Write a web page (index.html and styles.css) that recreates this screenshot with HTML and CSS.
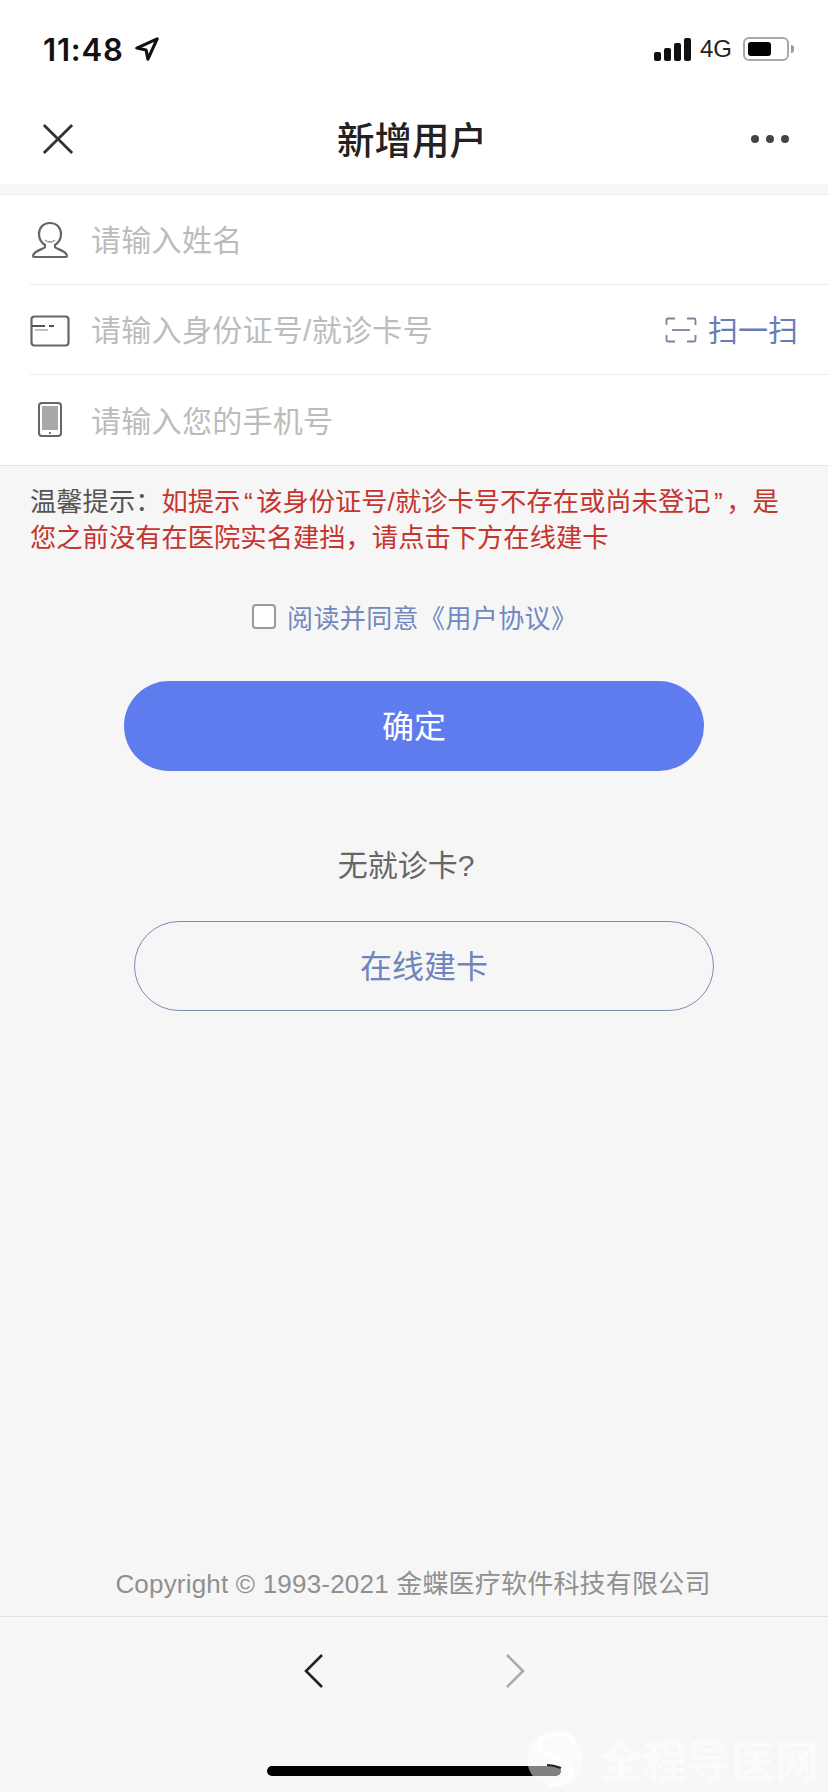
FILE: index.html
```html
<!DOCTYPE html>
<html lang="zh-CN">
<head>
  <meta charset="UTF-8">
  <title>新增用户</title>
  <link rel="stylesheet" href="styles.css">
</head>
<body>
  <div class="status-bar">
    <div class="status-left">
      <span class="time">11:48</span>
      <svg class="location" width="24" height="24" viewBox="0 0 26 26">
        <path d="M24 2 2 12l10 2 2 10z" fill="none" stroke="#111" stroke-width="3.400" stroke-linejoin="round"/>
      </svg>
    </div>
    <div class="status-right">
      <div class="signal">
        <span class="bar bar-1"></span>
        <span class="bar bar-2"></span>
        <span class="bar bar-3"></span>
        <span class="bar bar-4"></span>
      </div>
      <span class="network">4G</span>
      <div class="battery"><span class="battery-fill"></span></div>
      <span class="battery-cap"></span>
    </div>
  </div>

  <header class="nav-bar">
    <svg class="close-icon" width="34" height="34" viewBox="0 0 34 34">
      <path d="M2 2l30 30M32 2 2 32" stroke="#333" stroke-width="3" fill="none"/>
    </svg>
    <h1>新增用户</h1>
    <div class="more"><span></span><span></span><span></span></div>
  </header>

  <form class="user-form">
    <div class="form-row">
      <svg class="row-icon" width="40" height="38" viewBox="0 0 40 38">
        <path d="M20 2c-7 0-11 5-11 11 0 5 3 9 6 11v2c0 2-11 3-12 9 0 1 0 1 1 1h32c1 0 1 0 1-1-1-6-12-7-12-9v-2c3-2 6-6 6-11 0-6-4-11-11-11z" fill="none" stroke="#666" stroke-width="2.2"/>
        <path d="M15 19c3 2.500 7 2.500 10 0" fill="none" stroke="#999" stroke-width="1.600"/>
      </svg>
      <span class="placeholder">请输入姓名</span>
    </div>
    <div class="form-row">
      <svg class="row-icon row-icon-card" width="40" height="32" viewBox="0 0 40 32">
        <rect x="1.500" y="1.500" width="37" height="29" rx="3" fill="none" stroke="#666" stroke-width="2.2"/>
        <path d="M2 11h13M19 11h5" stroke="#555" stroke-width="2"/>
        <path d="M5 15h13" stroke="#aaa" stroke-width="1.500"/>
      </svg>
      <span class="placeholder">请输入身份证号/就诊卡号</span>
      <div class="scan">
        <svg width="32" height="26" viewBox="0 0 32 26">
          <path d="M10 1.500H3Q1.500 1.500 1.500 3v5M22 1.500h7q1.500 0 1.500 1.500v5M10 24.500H3q-1.500 0-1.500-1.500v-5M22 24.500h7q1.500 0 1.500-1.500v-5" fill="none" stroke="#7a83a0" stroke-width="1.800"/>
          <path d="M7 13h18" stroke="#7a83a0" stroke-width="1.800"/>
        </svg>
        <span class="scan-text">扫一扫</span>
      </div>
    </div>
    <div class="form-row">
      <svg class="row-icon" width="40" height="36" viewBox="0 0 40 36">
        <rect x="9" y="1" width="22" height="33" rx="3" fill="#fff" stroke="#666" stroke-width="2"/>
        <rect x="12" y="4" width="16" height="24" fill="#a9a9a9"/>
        <circle cx="20" cy="31" r="1" fill="#555"/>
      </svg>
      <span class="placeholder">请输入您的手机号</span>
    </div>
  </form>

  <p class="notice">温馨提示&#xFF1A;<span class="notice-red">如提示<span class="quote">“</span>该身份证号/就诊卡号不存在或尚未登记<span class="quote">”</span>&#xFF0C;是<br>您之前没有在医院实名建挡&#xFF0C;请点击下方在线建卡</span></p>

  <div class="agree">
    <span class="checkbox"></span>
    <span>阅读并同意《用户协议》</span>
  </div>

  <button type="button" class="btn-primary">确定</button>
  <p class="no-card">无就诊卡?</p>
  <button type="button" class="btn-outline">在线建卡</button>

  <p class="copyright">Copyright © 1993-2021 金蝶医疗软件科技有限公司</p>

  <footer class="bottom-bar">
    <svg width="20" height="34" viewBox="0 0 20 34">
      <path d="M18 1 2 17l16 16" fill="none" stroke="#222" stroke-width="2.600"/>
    </svg>
    <svg width="20" height="34" viewBox="0 0 20 34">
      <path d="M2 1l16 16L2 33" fill="none" stroke="#aaa" stroke-width="2.600"/>
    </svg>
  </footer>
  <div class="home-bar"></div>

  <div class="watermark">
    <svg width="64" height="64" viewBox="0 0 64 64">
      <circle cx="32" cy="32" r="28" fill="rgba(255,255,255,0.5)"/>
      <path d="M52 14C40 2 18 6 16 18c-2 12 30 12 32 26 1 8-10 14-22 14" fill="none" stroke="rgba(255,255,255,0.8)" stroke-width="5"/>
      <path d="M24 38c4 0 9 1 14 3" fill="none" stroke="#222" stroke-width="2"/>
    </svg>
    <span>全程导医网</span>
  </div>
</body>
</html>
```

FILE: styles.css
```css
* {
  box-sizing: border-box;
}

body {
  width: 828px;
  height: 1792px;
  margin: 0;
  position: relative;
  overflow: hidden;
  display: flex;
  flex-direction: column;
  background-color: #f6f6f6;
  font-family: "Liberation Sans", "Noto Sans CJK SC", sans-serif;
}

.status-bar {
  height: 94px;
  padding: 4px 34px 0 43px;
  display: flex;
  justify-content: space-between;
  align-items: center;
  background: #fff;
}

.status-left,
.status-right {
  display: flex;
  align-items: center;
}

.time {
  font-family: Inter, sans-serif;
  font-size: 31px;
  font-weight: 600;
  letter-spacing: 0.8px;
  color: #111;
}

.location {
  margin-left: 11px;
}

.signal {
  display: flex;
  align-items: flex-end;
  gap: 3px;
  height: 23px;
}

.bar {
  width: 7px;
  background: #111;
  border-radius: 2px;
}

.bar-1 { height: 9px; }
.bar-2 { height: 13px; }
.bar-3 { height: 18px; }
.bar-4 { height: 23px; }

.network {
  margin: 0 11px 0 9px;
  font-size: 24px;
  color: #222;
}

.battery {
  width: 46px;
  height: 24px;
  padding: 3px;
  border: 2px solid #a8a8a8;
  border-radius: 6px;
}

.battery-fill {
  display: block;
  width: 23px;
  height: 100%;
  background: #000;
  border-radius: 3px;
}

.battery-cap {
  width: 3px;
  height: 8px;
  margin-left: 2px;
  background: #999;
  border-radius: 0 3px 3px 0;
}

.nav-bar {
  height: 90px;
  padding: 0 39px 0 42px;
  display: flex;
  justify-content: space-between;
  align-items: center;
  background: #fff;
}

.close-icon {
  width: 32px;
}

.nav-bar h1 {
  margin: 0 0 3px -1px;
  font-size: 37.5px;
  font-weight: 500;
  color: #222;
}

.more {
  display: flex;
  gap: 7px;
}

.more span {
  width: 8px;
  height: 8px;
  background: #444;
  border-radius: 50%;
}

.user-form {
  margin-top: 10px;
  background: #fff;
  border-top: 1px solid #ececec;
  border-bottom: 1px solid #e6e6e6;
}

.form-row {
  height: 90px;
  margin-left: 30px;
  padding-right: 30px;
  display: flex;
  align-items: center;
  border-bottom: 1px solid #ececec;
}

.form-row:last-child {
  border-bottom: none;
}

.row-icon {
  margin-right: 21px;
  flex-shrink: 0;
}

.row-icon-card {
  margin-top: 2px;
}

.placeholder {
  padding-bottom: 3px;
  font-size: 30px;
  letter-spacing: 0.3px;
  color: #bcbcbc;
}

.scan {
  margin-left: auto;
  display: flex;
  align-items: center;
  gap: 11px;
  font-size: 30px;
  color: #6b7cb4;
}

.scan-text {
  padding-bottom: 4px;
}

.notice {
  margin: 18px 30px 0;
  font-size: 26.3px;
  line-height: 36px;
  white-space: nowrap;
  color: #555;
}

.notice-red {
  color: #c5352f;
}

.quote {
  margin: 0 3.5px;
}

.agree {
  margin-top: 42px;
  padding-left: 252px;
  display: flex;
  align-items: center;
  gap: 11px;
  font-size: 26px;
  letter-spacing: 0.4px;
  color: #7288c0;
}

.checkbox {
  width: 24px;
  height: 25px;
  background: #fff;
  border: 2px solid #9a9a9a;
  border-radius: 4px;
}

.btn-primary,
.btn-outline {
  display: block;
  width: 580px;
  height: 90px;
  padding: 0 0 4px;
  font-family: inherit;
  font-size: 32px;
  border-radius: 45px;
}

.btn-primary {
  margin: 46px 0 0 124px;
  color: #fff;
  background: #5f7cee;
  border: none;
}

.no-card {
  margin: 0;
  padding-top: 73px;
  text-align: center;
  font-size: 30px;
  line-height: 44px;
  color: #666;
  width: 812px;
}

.btn-outline {
  margin: 33px 0 0 134px;
  color: #6f85bb;
  background: transparent;
  border: 1px solid #7b8bb5;
}

.copyright {
  margin: auto 2px 0 0;
  height: 50px;
  text-align: center;
  font-size: 26px;
  line-height: 36px;
  letter-spacing: 0.2px;
  color: #909090;
}

.bottom-bar {
  height: 176px;
  padding: 37px 0 0 304px;
  display: flex;
  align-items: flex-start;
  gap: 181px;
  background: #f7f7f7;
  border-top: 1px solid #e2e2e2;
}

.home-bar {
  position: absolute;
  left: 267px;
  top: 1766px;
  width: 294px;
  height: 10px;
  background: #000;
  border-radius: 5px;
}

.watermark {
  position: absolute;
  left: 523px;
  top: 1727px;
  display: flex;
  align-items: center;
  gap: 12px;
  font-family: "Noto Sans CJK SC", sans-serif;
  font-size: 44px;
  font-weight: 700;
  color: rgba(255, 255, 255, 0.6);
}
```
